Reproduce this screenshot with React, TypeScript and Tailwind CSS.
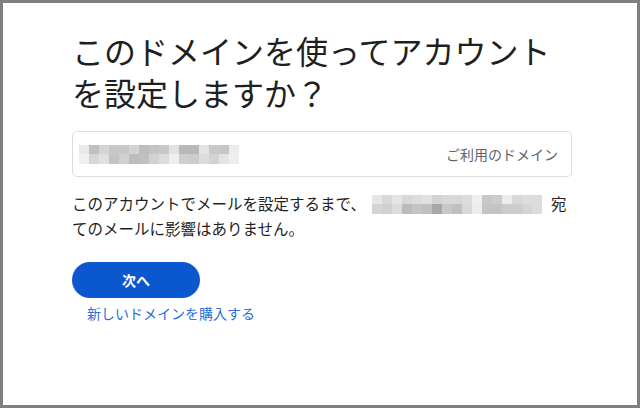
const inputMosaic = [
  ['#e9e9e9', '#c0c0c0', '#d4d4d4', '#c8c8c8', '#c8c8c8', '#d4d4d4', '#bdbdbd', '#c4c4c4', '#c8c8c8', '#e2e2e2', '#b8b8b8', '#b8b8b8', '#e4e4e4', '#c9c9c9', '#c6c6c6', '#ececec'],
  ['#f0f0f0', '#d6d6d6', '#e0e0e0', '#c4c4c4', '#d0d0d0', '#bdbdbd', '#c0c0c0', '#d2d2d2', '#dddddd', '#efefef', '#cfcfcf', '#cccccc', '#dcdcdc', '#d2d2d2', '#e4e4e4', '#eeeeee']
];

const textMosaic = [
  ['#e6e6e6', '#d8d8d8', '#e4e4e4', '#d8d8d8', '#dcdcdc', '#e0e0e0', '#d4d4d4', '#d8d8d8', '#d8d8d8', '#dcdcdc', '#f0f0f0', '#c8c8c8', '#cccccc', '#ececec', '#d8d8d8', '#dcdcdc', '#dcdcdc'],
  ['#d4d4d4', '#d0d0d0', '#dcdcdc', '#bcbcbc', '#c4c4c4', '#c0c0c0', '#a8a8a8', '#c8c8c8', '#c0c0c0', '#d8d8d8', '#ececec', '#c4c4c4', '#c4c4c4', '#cccccc', '#cccccc', '#d4d4d4', '#dcdcdc']
];

function Mosaic({ rows, className }: { rows: string[][]; className?: string }) {
  return (
    <span className={`inline-flex flex-col align-middle ${className ?? ''}`}>
      {rows.map((row, r) => (
        <span key={r} className="flex">
          {row.map((c, i) => (
            // colours come from the data table, so inline style
            <span key={i} className="block w-[10px] h-[9.5px]" style={{ backgroundColor: c }} />
          ))}
        </span>
      ))}
    </span>
  );
}

export default function App() {
  return (
    <div
      className="w-[640px] h-[408px] border-[3px] border-[#808080] bg-white text-[#1f1f1f] overflow-hidden"
      style={{ fontFamily: '"Noto Sans CJK JP", "Noto Sans", sans-serif' }}
    >
      <div className="pl-[69px] pr-[65px] pt-[26px]">
        <h1 className="text-[32px] leading-[42px] font-normal text-[#1f1f1f]">
          このドメインを使ってアカウント
          <br />
          を設定しますか？
        </h1>

        <div className="mt-[18px] h-[46px] w-[500px] rounded-[5px] border border-[#dadce0] flex items-center justify-between pl-[6px] pr-[13px]">
          <Mosaic rows={inputMosaic} />
          <span className="text-[14px] text-[#5f6368]">ご利用のドメイン</span>
        </div>

        <p className="mt-[14px] w-[504px] text-[15.5px] leading-[25px] text-[#1f1f1f]">
          このアカウントでメールを設定するまで、
          <Mosaic rows={textMosaic} className="ml-[6px] mr-[9px] -mt-[3px]" />
          宛てのメールに影響はありません。
        </p>

        <button className="mt-[21px] h-[36px] w-[128px] rounded-full bg-[#0b57d0] text-white text-[14px] font-bold">
          次へ
        </button>

        <div className="mt-[5px] pl-[15px] text-[14px] leading-[20px] text-[#2a6fdb]">
          新しいドメインを購入する
        </div>
      </div>
    </div>
  );
}
